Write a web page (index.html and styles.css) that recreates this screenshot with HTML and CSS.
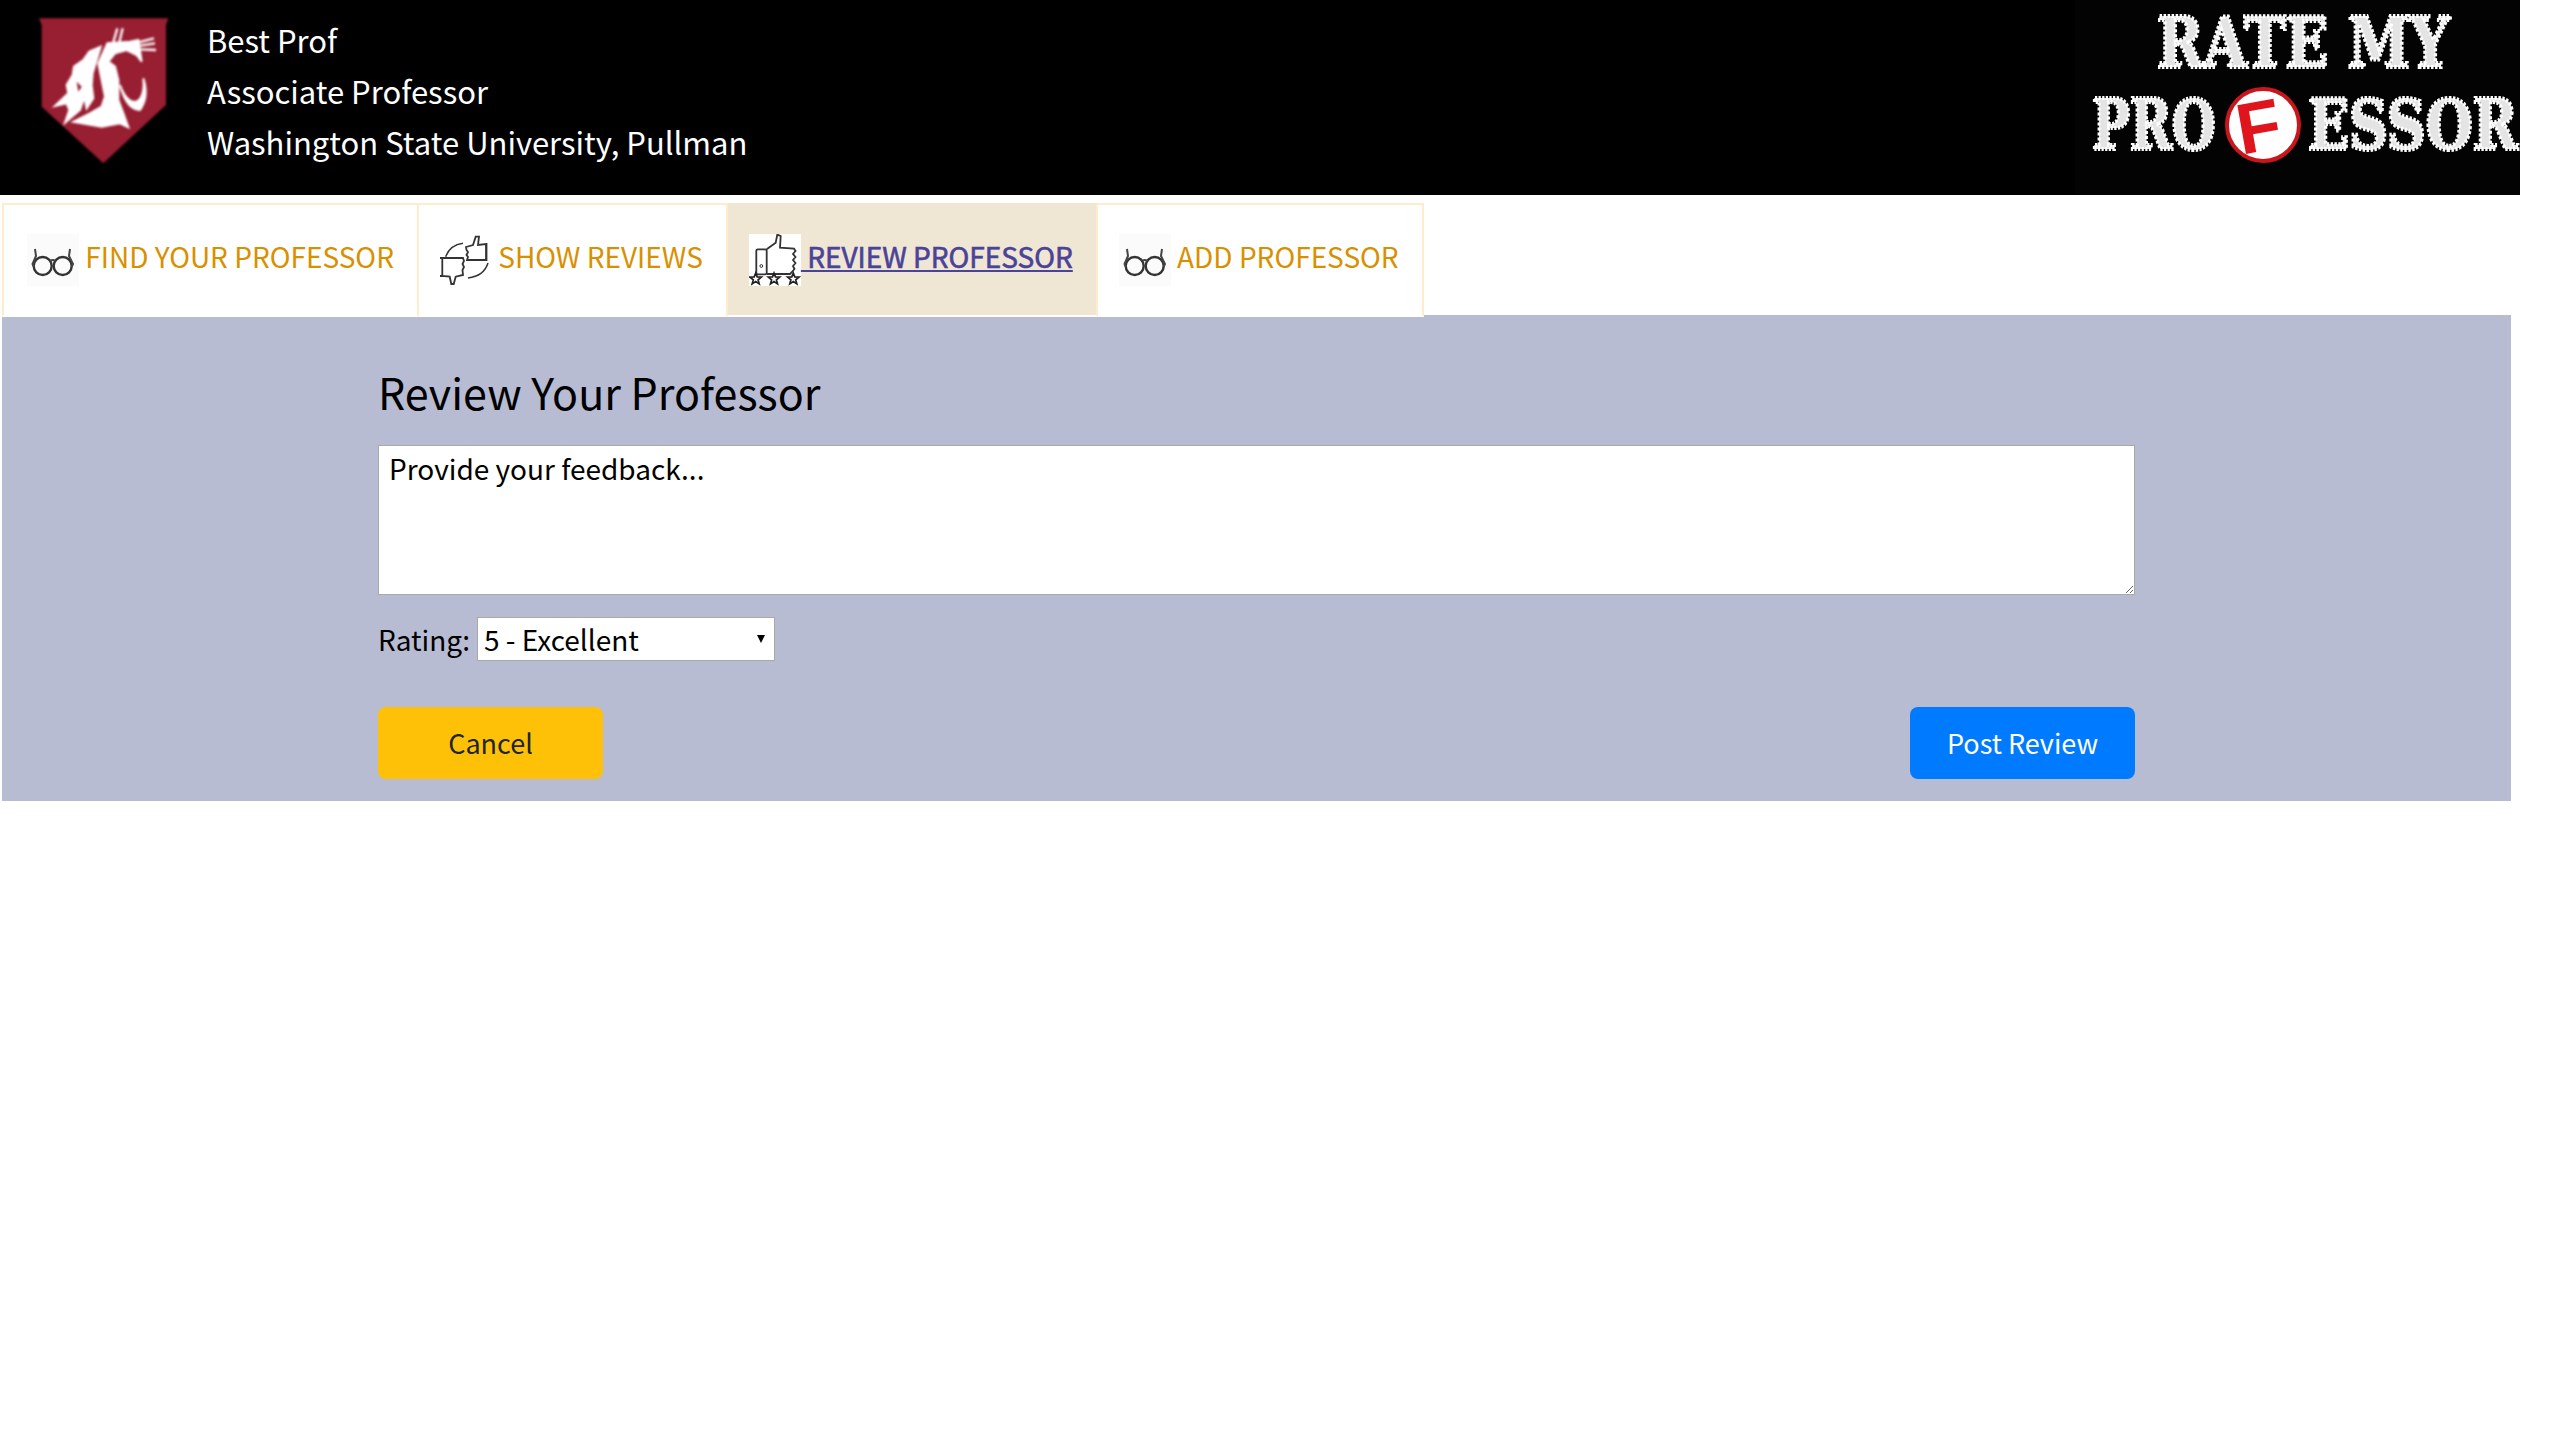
FILE: index.html
```html
<!DOCTYPE html>
<html lang="en">
<head>
    <meta charset="UTF-8">
    <meta name="viewport" content="width=device-width, initial-scale=1.0">
    <title>Review Professor</title>
    <link rel="stylesheet" href="styles.css">
</head>
<body>
<div class="page">
    <header class="top-bar">
        <svg class="crest" viewBox="0 0 450 480">
            <path d="M27 25H415L408 45V285L220 460L35 290V45Z" fill="#981e32"/>
            <g fill="#fff" stroke="#fff" stroke-width="6">
                <path d="M75 288L115 250L110 225L128 195L132 170L160 150L178 125L212 110L200 150L188 190L185 225L190 265L170 295L165 270L155 250L160 270L150 300L105 338L118 300L110 280Z"/>
                <path d="M232 100L300 95L325 90L335 155L320 135L290 120L255 130L235 155L255 170L265 210L265 270L280 310L295 352L270 340L215 350L130 335L180 310L215 290L225 260L215 210L205 160Z"/>
                <path d="M340 205Q358 260 330 300Q290 300 270 225Q290 280 320 275Q345 260 340 205Z"/>
            </g>
            <path d="M140 215L155 230L145 245Z" fill="#981e32"/>
            <path d="M262 55L250 97M278 55L268 97M325 97L372 85M330 107L375 100M330 118L378 120" stroke="#fff" stroke-width="7" fill="none"/>
        </svg>
        <div class="prof-info">
            <div>Best Prof</div>
            <div>Associate Professor</div>
            <div>Washington State University, Pullman</div>
        </div>
        <svg class="site-logo" viewBox="0 0 445 195">
            <text class="logo-word" transform="translate(82 67) scale(.8 1)">RATE MY</text>
            <text class="logo-word" transform="translate(17 149) scale(.72 1)">PRO</text>
            <circle cx="188" cy="125" r="36" fill="#fff" stroke="#c8161c" stroke-width="4"/>
            <text class="logo-f" transform="translate(188 151) rotate(-10)" text-anchor="middle">F</text>
            <text class="logo-word" transform="translate(233 149) scale(.77 1)">ESSOR</text>
        </svg>
    </header>

    <nav class="tabs">
        <div class="tab">
            <a href="#">
                <svg class="icon icon-soft" viewBox="0 0 52 52">
                    <circle cx="15.7" cy="32" r="9" fill="none" stroke="#333" stroke-width="2.4"/>
                    <circle cx="35.7" cy="32" r="9" fill="none" stroke="#333" stroke-width="2.4"/>
                    <path d="M8 15L9 22L5.5 30L7 33M43 15L42 22L46 30L44.5 33M23 27Q25.7 25 28.5 27" fill="none" stroke="#444" stroke-width="2"/>
                </svg>
                FIND YOUR PROFESSOR</a>
        </div>
        <div class="tab">
            <a href="#">
                <svg class="icon" viewBox="0 0 52 52">
                    <path d="M26 13L33 11L35.7 2.7L39 2.7L38 11L46 10V26H27L28 23L26.5 21L28 18L26.5 16ZM46.5 9V27" fill="none" stroke="#333" stroke-width="1.8"/>
                    <path d="M23 24L24 27L22.5 30L24 33L22.5 36L23 41L15.7 42.7L13.7 50L11.3 50L9.7 42.7L2.3 42V24ZM0 24H3M0 42H3" fill="none" stroke="#333" stroke-width="1.8"/>
                    <path d="M23 9.3Q10 11 5.7 22.7M48 29Q44 42 28 44" fill="none" stroke="#333" stroke-width="1.5"/>
                </svg>
                SHOW REVIEWS</a>
        </div>
        <div class="tab tab-active">
            <a href="#">
                <svg class="icon icon-white" viewBox="0 0 52 52">
                    <rect x="7.3" y="15.3" width="10.4" height="25" rx="1.5" fill="none" stroke="#333" stroke-width="1.8"/>
                    <circle cx="12.3" cy="32" r="1.4" fill="none" stroke="#333" stroke-width="1"/>
                    <path d="M17.7 15.3L26.7 8.7L28.3 .6L31.7 2L31 13.7L45 14.7L46.5 17L44 20L46.5 23L44 26L46.5 29L44 32L45.5 35L43 38L41 40H17.7" fill="none" stroke="#333" stroke-width="1.8"/>
                    <g fill="none" stroke="#222" stroke-width="1.7">
                        <polygon transform="translate(6.7 45)" points="0,-6 1.5,-2.1 5.7,-1.9 2.4,.8 3.5,4.9 0,2.6 -3.5,4.9 -2.4,.8 -5.7,-1.9 -1.5,-2.1"/>
                        <polygon transform="translate(25 45)" points="0,-6 1.5,-2.1 5.7,-1.9 2.4,.8 3.5,4.9 0,2.6 -3.5,4.9 -2.4,.8 -5.7,-1.9 -1.5,-2.1"/>
                        <polygon transform="translate(44.3 45)" points="0,-6 1.5,-2.1 5.7,-1.9 2.4,.8 3.5,4.9 0,2.6 -3.5,4.9 -2.4,.8 -5.7,-1.9 -1.5,-2.1"/>
                    </g>
                </svg>
                REVIEW PROFESSOR</a>
        </div>
        <div class="tab">
            <a href="#">
                <svg class="icon icon-soft" viewBox="0 0 52 52">
                    <circle cx="15.7" cy="32" r="9" fill="none" stroke="#333" stroke-width="2.4"/>
                    <circle cx="35.7" cy="32" r="9" fill="none" stroke="#333" stroke-width="2.4"/>
                    <path d="M8 15L9 22L5.5 30L7 33M43 15L42 22L46 30L44.5 33M23 27Q25.7 25 28.5 27" fill="none" stroke="#444" stroke-width="2"/>
                </svg>
                ADD PROFESSOR</a>
        </div>
    </nav>

    <main class="panel">
        <form class="review-form">
            <h3>Review Your Professor</h3>
            <textarea class="feedback">Provide your feedback...</textarea>
            <div class="rating-row">
                <label for="rating">Rating:</label>
                <span class="select-wrap">
                    <select id="rating">
                        <option>5 - Excellent</option>
                        <option>4 - Good</option>
                        <option>3 - Average</option>
                        <option>2 - Poor</option>
                        <option>1 - Terrible</option>
                    </select>
                </span>
            </div>
            <div class="actions">
                <button type="button" class="btn btn-cancel">Cancel</button>
                <button type="button" class="btn btn-post">Post Review</button>
            </div>
        </form>
    </main>
</div>
</body>
</html>
```

FILE: styles.css
```css
body {
    margin: 0;
    background-color: #fff;
    font-family: "Noto Sans CJK JP", "Noto Sans", sans-serif;
    font-size: 28px;
    color: #000;
}
.page {
    width: 2520px;
}
.top-bar {
    height: 195px;
    background-color: #000;
    display: flex;
    padding-left: 30px;
    box-sizing: border-box;
}
.crest {
    width: 150px;
    height: 160px;
    margin-top: 10px;
    filter: blur(.8px);
}
.prof-info {
    margin-left: 27px;
    padding-top: 14px;
    color: #fff;
    font-size: 31px;
    line-height: 51px;
}
.site-logo {
    width: 445px;
    height: 195px;
    margin-left: auto;
    background-color: #030303;
}
.logo-word {
    font-family: "DejaVu Serif", serif;
    font-weight: bold;
    font-size: 70px;
    fill: #e4e4e4;
    stroke: #fff;
    stroke-width: 4px;
    stroke-dasharray: 3 2;
}
.logo-f {
    font-family: "Liberation Sans", sans-serif;
    font-weight: bold;
    font-size: 72px;
    fill: #e0141c;
}
.tabs {
    display: flex;
    margin: 8px 0 -2px 2px;
    position: relative;
}
.tab {
    height: 114px;
    box-sizing: border-box;
    border: 2px solid #ffeccd;
    border-bottom-color: #fff;
    padding: 0 23px;
    display: flex;
    align-items: center;
}
.tab + .tab {
    border-left: 0;
    padding-left: 21px;
}
.tab a {
    color: #d99000;
    text-decoration: none;
    white-space: nowrap;
}
.tab-active {
    background-color: #efe6d3;
    border-color: #efe6d3 #ffeccd #fff #efe6d3;
}
.tab-active a {
    color: #4a4399;
    text-decoration: underline;
    -webkit-text-stroke: .6px #4a4399;
}
.icon {
    width: 52px;
    height: 52px;
    vertical-align: middle;
}
.icon-soft {
    background-color: #fbfbfb;
}
.icon-white {
    background-color: #fff;
}
.panel {
    width: 2509px;
    height: 486px;
    box-sizing: border-box;
    margin-left: 2px;
    padding-top: 47px;
    background-color: #b7bcd3;
}
.review-form {
    width: 1757px;
    margin-left: 376px;
}
h3 {
    margin: 0 0 25px;
    font-size: 43px;
    font-weight: 400;
    line-height: 58px;
}
.feedback {
    display: block;
    width: 100%;
    height: 150px;
    box-sizing: border-box;
    padding: 2px 10px;
    border: 1px solid #a9a9a9;
    font-family: inherit;
    font-size: 28px;
    line-height: 40px;
}
.rating-row {
    margin-top: 22px;
    display: flex;
    align-items: center;
    gap: 7px;
    line-height: 44px;
}
.select-wrap {
    position: relative;
    display: flex;
}
/* the little arrow */
.select-wrap::after {
    content: "";
    position: absolute;
    right: 10px;
    top: 18px;
    border-left: 4px solid transparent;
    border-right: 4px solid transparent;
    border-top: 8px solid #000;
}
#rating {
    appearance: none;
    width: 298px;
    height: 44px;
    padding: 0 6px;
    border: 1px solid #a9a9a9;
    background-color: #fff;
    color: #000;
    font-family: inherit;
    font-size: 28px;
    border-radius: 0;
}
.actions {
    margin-top: 46px;
    display: flex;
    justify-content: space-between;
}
.btn {
    width: 225px;
    height: 72px;
    padding: 0 0 2px;
    border: 0;
    border-radius: 8px;
    font-family: inherit;
    font-size: 27px;
}
.btn-cancel {
    background-color: #ffc107;
    color: #212529;
}
.btn-post {
    background-color: #007bff;
    color: #fff;
}
```
